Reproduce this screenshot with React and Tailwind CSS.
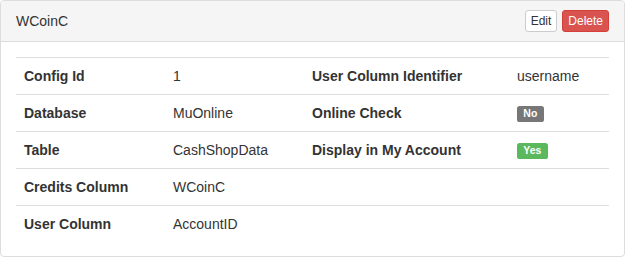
import React from 'react';

const rows = [
    { label: 'Config Id', value: '1', label2: 'User Column Identifier', value2: 'username' },
    { label: 'Database', value: 'MuOnline', label2: 'Online Check', badge: { text: 'No', cls: 'bg-[#777777]' } },
    { label: 'Table', value: 'CashShopData', label2: 'Display in My Account', badge: { text: 'Yes', cls: 'bg-[#5cb85c]' } },
    { label: 'Credits Column', value: 'WCoinC' },
    { label: 'User Column', value: 'AccountID' },
];

export default function App() {
    return (
        <div className="w-[625px] h-[258px] bg-white text-[14px] leading-[20px] text-[#333333]" style={{ fontFamily: '"Liberation Sans", Arial, sans-serif' }}>
            <div className="border border-[#dddddd] rounded-[4px] overflow-hidden">
                {/* heading */}
                <div className="flex items-center justify-between bg-[#f5f5f5] border-b border-[#dddddd] px-[15px] h-[41px]">
                    <h3 className="text-[14px] leading-[20px] m-0">WCoinC</h3>
                    <div className="flex gap-[5px]">
                        <button className="px-[5px] py-[1px] text-[12px] leading-[18px] border border-[#cccccc] bg-white text-[#333333] rounded-[3px]">
                            Edit
                        </button>
                        <button className="px-[5px] py-[1px] text-[12px] leading-[18px] border border-[#d43f3a] bg-[#d9534f] text-white rounded-[3px]">
                            Delete
                        </button>
                    </div>
                </div>

                {/* body */}
                <div className="p-[15px] pb-[14px]">
                    <table className="w-full border-collapse">
                        <tbody>
                            {rows.map((r) => (
                                <tr key={r.label} className="border-t border-[#dddddd]">
                                    <td className="w-[149px] p-[8px] font-bold">{r.label}</td>
                                    <td className="w-[139px] p-[8px]">{r.value}</td>
                                    <td className="w-[205px] p-[8px] font-bold">{r.label2}</td>
                                    <td className="p-[8px]">
                                        {r.badge ? (
                                            <span className={`${r.badge.cls} inline-block text-white font-bold text-[10.5px] leading-[1] px-[0.6em] pt-[0.2em] pb-[0.3em] rounded-[0.25em] align-[1px]`}>
                                                {r.badge.text}
                                            </span>
                                        ) : (
                                            r.value2
                                        )}
                                    </td>
                                </tr>
                            ))}
                        </tbody>
                    </table>
                </div>
            </div>
        </div>
    );
}
